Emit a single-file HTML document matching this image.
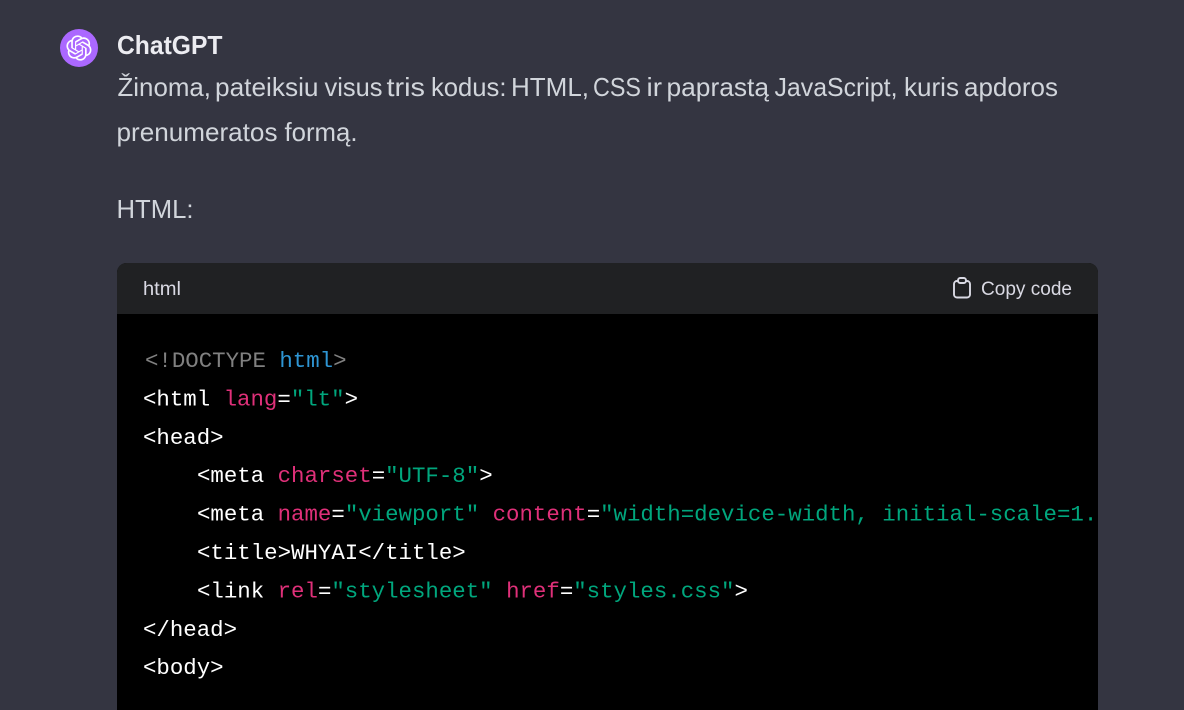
<!DOCTYPE html>
<html lang="lt">
<head>
<meta charset="utf-8">
<title>ChatGPT</title>
<style>
html,body{margin:0;padding:0;background:#343541;width:1184px;height:710px;overflow:hidden}
svg{display:block}
text{font-family:"Liberation Sans",sans-serif;white-space:pre}
.p{font-size:25.6px;fill:#d1d5db}
.c{font-family:"Liberation Mono",monospace;font-size:22.4px;fill:#fff;white-space:pre}
.g{fill:#808080}.b{fill:#2e95d3}.r{fill:#df3079}.s{fill:#00a67d}
</style>
</head>
<body>
<svg width="1184" height="710" viewBox="0 0 1184 710" xmlns="http://www.w3.org/2000/svg">
<defs><clipPath id="cb"><rect x="117" y="263" width="981" height="447"/></clipPath></defs>
<rect width="1184" height="710" fill="#343541"/>
<circle cx="79" cy="48" r="19" fill="#ab68ff"/>
<svg x="66" y="35" width="26" height="26" viewBox="0 0 41 41"><path fill="#fff" d="M37.5324 16.8707C37.9808 15.5241 38.1363 14.0974 37.9886 12.6859C37.8409 11.2744 37.3934 9.91076 36.676 8.68622C35.6126 6.83404 33.9882 5.3676 32.0373 4.4985C30.0864 3.62941 27.9098 3.40259 25.8215 3.85078C24.8796 2.7893 23.7219 1.94125 22.4257 1.36341C21.1295 0.785575 19.7249 0.491269 18.3058 0.500197C16.1708 0.495044 14.0893 1.16803 12.3614 2.42214C10.6335 3.67624 9.34853 5.44666 8.6917 7.47815C7.30085 7.76286 5.98686 8.3414 4.8377 9.17505C3.68854 10.0087 2.73073 11.0782 2.02839 12.312C0.956464 14.1591 0.498905 16.2988 0.721698 18.4228C0.944492 20.5467 1.83612 22.5449 3.268 24.1293C2.81966 25.4759 2.66413 26.9026 2.81182 28.3141C2.95951 29.7256 3.40701 31.0892 4.12437 32.3138C5.18791 34.1659 6.8123 35.6322 8.76321 36.5013C10.7141 37.3704 12.8907 37.5973 14.9789 37.1492C15.9208 38.2107 17.0786 39.0587 18.3747 39.6366C19.6709 40.2144 21.0755 40.5087 22.4946 40.4998C24.6307 40.5054 26.7133 39.8321 28.4418 38.5772C30.1704 37.3223 31.4556 35.5506 32.1119 33.5179C33.5027 33.2332 34.8167 32.6547 35.9659 31.821C37.115 30.9874 38.0728 29.9178 38.7752 28.684C39.8458 26.8371 40.3023 24.6979 40.0789 22.5748C39.8556 20.4517 38.9639 18.4544 37.5324 16.8707ZM22.4978 37.8849C20.7443 37.8874 19.0459 37.2733 17.6994 36.1501C17.7601 36.117 17.8666 36.0586 17.936 36.0161L25.9004 31.4156C26.1003 31.3019 26.2663 31.137 26.3813 30.9378C26.4964 30.7386 26.5563 30.5124 26.5549 30.2825V19.0542L29.9213 20.998C29.9389 21.0068 29.9541 21.0198 29.9656 21.0359C29.977 21.052 29.9842 21.0707 29.9867 21.0902V30.3889C29.9842 32.375 29.1946 34.2791 27.7909 35.6841C26.3872 37.0892 24.4838 37.8806 22.4978 37.8849ZM6.39227 31.0064C5.51397 29.4888 5.19742 27.7107 5.49804 25.9832C5.55718 26.0187 5.66048 26.0818 5.73461 26.1244L13.699 30.7248C13.8975 30.8408 14.1233 30.902 14.3532 30.902C14.583 30.902 14.8088 30.8408 15.0073 30.7248L24.731 25.1103V28.9979C24.7321 29.0177 24.7283 29.0376 24.7199 29.0556C24.7115 29.0736 24.6988 29.0893 24.6829 29.1012L16.6317 33.7497C14.9096 34.7416 12.8643 35.0097 10.9447 34.4954C9.02506 33.9811 7.38785 32.7263 6.39227 31.0064ZM4.29707 13.6194C5.17156 12.0998 6.55279 10.9364 8.19885 10.3327C8.19885 10.4013 8.19491 10.5228 8.19491 10.6071V19.808C8.19351 20.0378 8.25334 20.2638 8.36823 20.4629C8.48312 20.6619 8.64893 20.8267 8.84863 20.9404L18.5723 26.5542L15.206 28.4979C15.1894 28.5089 15.1703 28.5155 15.1505 28.5173C15.1307 28.5191 15.1107 28.516 15.0924 28.5082L7.04046 23.8557C5.32135 22.8601 4.06716 21.2235 3.55289 19.3046C3.03862 17.3858 3.30624 15.3413 4.29707 13.6194ZM31.955 20.0556L22.2312 14.4411L25.5976 12.4981C25.6142 12.4872 25.6333 12.4805 25.6531 12.4787C25.6729 12.4769 25.6928 12.4801 25.7111 12.4879L33.7631 17.1364C34.9967 17.849 36.0017 18.8982 36.6606 20.1613C37.3194 21.4244 37.6047 22.849 37.4832 24.2684C37.3617 25.6878 36.8382 27.0432 35.9743 28.1759C35.1103 29.3086 33.9415 30.1717 32.6047 30.6641C32.6047 30.5947 32.6047 30.4733 32.6047 30.3889V21.188C32.6066 20.9586 32.5474 20.7328 32.4332 20.5338C32.319 20.3348 32.154 20.1698 31.955 20.0556ZM35.3055 15.0128C35.2464 14.9765 35.1431 14.9142 35.069 14.8717L27.1045 10.2712C26.906 10.1554 26.6803 10.0943 26.4504 10.0943C26.2206 10.0943 25.9948 10.1554 25.7963 10.2712L16.0726 15.8858V11.9982C16.0715 11.9783 16.0753 11.9585 16.0837 11.9405C16.0921 11.9225 16.1048 11.9068 16.1207 11.8949L24.1719 7.25025C25.4053 6.53903 26.8158 6.19376 28.2383 6.25482C29.6608 6.31589 31.0364 6.78077 32.2044 7.59508C33.3723 8.40939 34.2842 9.53945 34.8334 10.8531C35.3826 12.1667 35.5464 13.6095 35.3055 15.0128ZM14.2424 21.9419L10.8752 19.9981C10.8576 19.9893 10.8423 19.9763 10.8309 19.9602C10.8195 19.9441 10.8122 19.9254 10.8098 19.9058V10.6071C10.8107 9.18295 11.2173 7.78848 11.9819 6.58696C12.7466 5.38544 13.8377 4.42659 15.1275 3.82264C16.4173 3.21869 17.8524 2.99464 19.2649 3.1767C20.6775 3.35876 22.0089 3.93941 23.1034 4.85067C23.0427 4.88379 22.937 4.94215 22.8668 4.98473L14.9024 9.58517C14.7025 9.69878 14.5366 9.86356 14.4215 10.0626C14.3065 10.2616 14.2466 10.4877 14.2479 10.7175L14.2424 21.9419ZM16.071 17.9991L20.4018 15.4978L24.7325 17.9975V22.9985L20.4018 25.4983L16.071 22.9985V17.9991Z"/></svg>

<text x="117" y="54" font-size="25.6" font-weight="700" fill="#ececf1" textLength="105.500" lengthAdjust="spacingAndGlyphs">ChatGPT</text>

<text class="p" x="117.500" y="96" textLength="93.500" lengthAdjust="spacingAndGlyphs">Žinoma,</text>
<text class="p" x="215" y="96" textLength="103.500" lengthAdjust="spacingAndGlyphs">pateiksiu</text>
<text class="p" x="324.500" y="96" textLength="58" lengthAdjust="spacingAndGlyphs">visus</text>
<text class="p" x="386.500" y="96" textLength="38.500" lengthAdjust="spacingAndGlyphs">tris</text>
<text class="p" x="431" y="96" textLength="75.500" lengthAdjust="spacingAndGlyphs">kodus:</text>
<text class="p" x="511" y="96" textLength="78" lengthAdjust="spacingAndGlyphs">HTML,</text>
<text class="p" x="593" y="96" textLength="48" lengthAdjust="spacingAndGlyphs">CSS</text>
<text class="p" x="646.500" y="96" textLength="15.500" lengthAdjust="spacingAndGlyphs">ir</text>
<text class="p" x="666.500" y="96" textLength="102.500" lengthAdjust="spacingAndGlyphs">paprastą</text>
<text class="p" x="774.500" y="96" textLength="123" lengthAdjust="spacingAndGlyphs">JavaScript,</text>
<text class="p" x="904" y="96" textLength="55" lengthAdjust="spacingAndGlyphs">kuris</text>
<text class="p" x="964" y="96" textLength="94" lengthAdjust="spacingAndGlyphs">apdoros</text>

<text class="p" x="116.500" y="141" textLength="161" lengthAdjust="spacingAndGlyphs">prenumeratos</text>
<text class="p" x="284.500" y="141" textLength="73" lengthAdjust="spacingAndGlyphs">formą.</text>
<text class="p" x="116.500" y="218" textLength="77" lengthAdjust="spacingAndGlyphs">HTML:</text>

<path d="M117 714V272.6a9.6 9.6 0 0 1 9.6-9.6H1088.4a9.6 9.6 0 0 1 9.6 9.6V714Z" fill="#000"/>
<path d="M117 314V272.6a9.6 9.6 0 0 1 9.6-9.6H1088.4a9.6 9.6 0 0 1 9.6 9.6V314Z" fill="#202123"/>
<text x="143" y="295" font-size="19.2" fill="#d9d9e3" textLength="38" lengthAdjust="spacingAndGlyphs">html</text>
<text x="981" y="295" font-size="19.2" fill="#d9d9e3" textLength="91" lengthAdjust="spacingAndGlyphs">Copy code</text>
<g fill="none" stroke="#d9d9e3" stroke-width="1.900" stroke-linecap="round" stroke-linejoin="round">
<path d="M966.500 281h0.500a3 3 0 0 1 3 3v10.500a3 3 0 0 1-3 3h-10a3 3 0 0 1-3-3v-10.500a3 3 0 0 1 3-3h0.500"/>
<rect x="958" y="278" width="8" height="5" rx="2.200"/>
</g>

<g clip-path="url(#cb)">
<text class="c g" x="145" y="367">&lt;!DOCTYPE <tspan class="b">html</tspan>&gt;</text>
<text class="c" x="143" y="405.400">&lt;html <tspan class="r">lang</tspan>=<tspan class="s">"lt"</tspan>&gt;</text>
<text class="c" x="143" y="443.800">&lt;head&gt;</text>
<text class="c" x="197" y="482.200">&lt;meta <tspan class="r">charset</tspan>=<tspan class="s">"UTF-8"</tspan>&gt;</text>
<text class="c" x="197" y="520.600">&lt;meta <tspan class="r">name</tspan>=<tspan class="s">"viewport"</tspan> <tspan class="r">content</tspan>=<tspan class="s">"width=device-width, initial-scale=1.0"</tspan>&gt;</text>
<text class="c" x="197" y="559">&lt;title&gt;WHYAI&lt;/title&gt;</text>
<text class="c" x="197" y="597.400">&lt;link <tspan class="r">rel</tspan>=<tspan class="s">"stylesheet"</tspan> <tspan class="r">href</tspan>=<tspan class="s">"styles.css"</tspan>&gt;</text>
<text class="c" x="143" y="635.800">&lt;/head&gt;</text>
<text class="c" x="143" y="674.200">&lt;body&gt;</text>
</g>
</svg>
</body>
</html>
